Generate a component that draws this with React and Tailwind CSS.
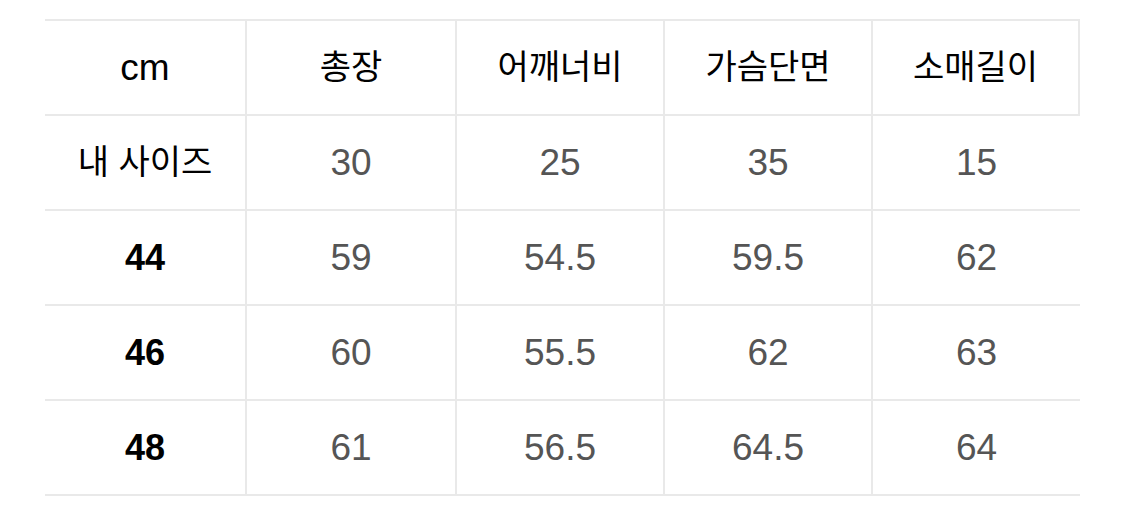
const headers = ['총장', '어깨너비', '가슴단면', '소매길이']

const rows = [
  { label: '내 사이즈', values: ['30', '25', '35', '15'] },
  { label: '44', values: ['59', '54.5', '59.5', '62'] },
  { label: '46', values: ['60', '55.5', '62', '63'] },
  { label: '48', values: ['61', '56.5', '64.5', '64'] },
]

const font = { fontFamily: '"Liberation Sans", "Noto Sans CJK KR", sans-serif' }

export default function App() {
  return (
    <div className="w-[1125px] h-[520px] bg-white pt-[19px] pl-[45px]" style={font}>
      <div className="w-[1035px] grid grid-cols-[202px_210px_208px_208px_207px] border-t-2 border-[#e9e9e9]">
        <div className="h-[95px] flex items-center justify-center border-b-2 border-r-2 border-[#e9e9e9] text-[37px] text-black">
          cm
        </div>
        {headers.map((h) => (
          <div
            key={h}
            className="h-[95px] flex items-center justify-center border-b-2 border-r-2 last:border-r-0 border-[#e9e9e9] text-[34px] text-black"
          >
            {h}
          </div>
        ))}
        {rows.map((r) => (
          <div key={r.label} className="contents">
            <div
              className={
                r.label === '내 사이즈'
                  ? 'h-[95px] flex items-center justify-center border-b-2 border-r-2 border-[#e9e9e9] text-[34px] text-black'
                  : 'h-[95px] flex items-center justify-center border-b-2 border-r-2 border-[#e9e9e9] text-[36px] font-bold text-black'
              }
            >
              {r.label}
            </div>
            {r.values.map((v, i) => (
              <div
                key={i}
                className={
                  i === 3
                    ? 'h-[95px] flex items-center justify-center border-b-2 border-[#e9e9e9] text-[37px] text-[#555]'
                    : 'h-[95px] flex items-center justify-center border-b-2 border-r-2 border-[#e9e9e9] text-[37px] text-[#555]'
                }
              >
                {v}
              </div>
            ))}
          </div>
        ))}
      </div>
    </div>
  )
}
